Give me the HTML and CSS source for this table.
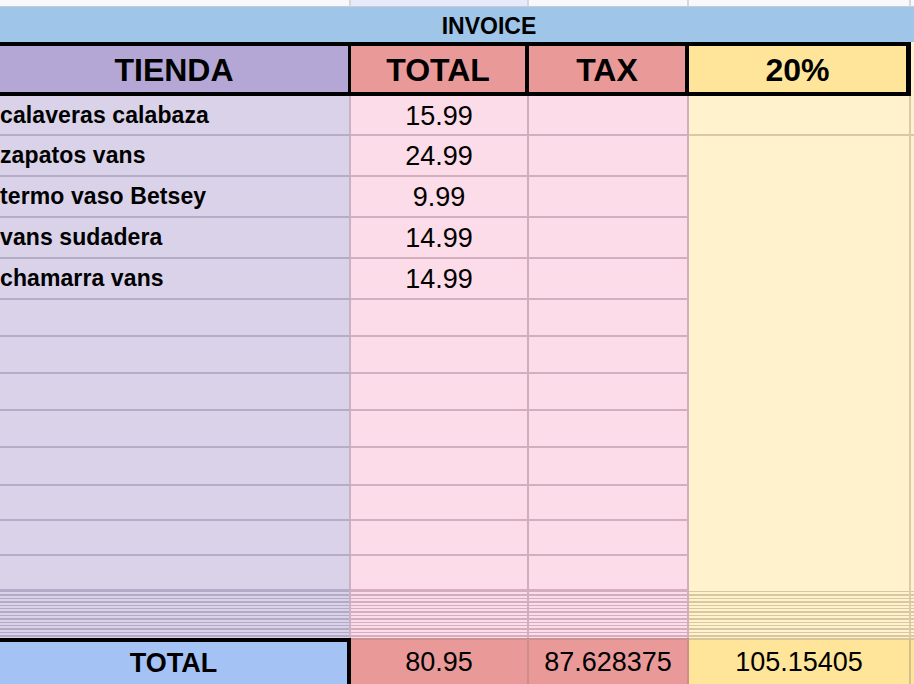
FILE: index.html
```html
<!DOCTYPE html>
<html lang="es">
<head>
<meta charset="utf-8">
<title>Invoice</title>
<link rel="stylesheet" href="styles.css">
</head>
<body>
<div class="sheet">
  <div class="cell top"></div>
  <div class="cell top top-alt"></div>
  <div class="cell top"></div>
  <div class="cell top"></div>
  <div class="cell top top-end"></div>

  <div class="invoice"><span>INVOICE</span></div>

  <div class="cell head head-tienda">TIENDA</div>
  <div class="cell head head-red">TOTAL</div>
  <div class="cell head head-red">TAX</div>
  <div class="cell head head-yellow">20%</div>
  <div class="cell head-end"></div>

  <div class="cell name">calaveras calabaza</div>
  <div class="cell pink num">15.99</div>
  <div class="cell pink"></div>
  <div class="cell yellow first"></div>
  <div class="cell yellow-end first"></div>

  <div class="cell name">zapatos vans</div>
  <div class="cell pink num">24.99</div>
  <div class="cell pink"></div>
  <div class="cell yellow merged"></div>
  <div class="cell yellow-end merged"></div>

  <div class="cell name">termo vaso Betsey</div>
  <div class="cell pink num">9.99</div>
  <div class="cell pink"></div>

  <div class="cell name">vans sudadera</div>
  <div class="cell pink num">14.99</div>
  <div class="cell pink"></div>

  <div class="cell name">chamarra vans</div>
  <div class="cell pink num">14.99</div>
  <div class="cell pink"></div>

  <div class="cell name"></div><div class="cell pink"></div><div class="cell pink"></div>
  <div class="cell name"></div><div class="cell pink"></div><div class="cell pink"></div>
  <div class="cell name"></div><div class="cell pink"></div><div class="cell pink"></div>
  <div class="cell name"></div><div class="cell pink"></div><div class="cell pink"></div>
  <div class="cell name"></div><div class="cell pink"></div><div class="cell pink"></div>
  <div class="cell name"></div><div class="cell pink"></div><div class="cell pink"></div>
  <div class="cell name"></div><div class="cell pink"></div><div class="cell pink"></div>
  <div class="cell name"></div><div class="cell pink"></div><div class="cell pink"></div>

  <div class="cell squeeze sq-lav"></div>
  <div class="cell squeeze sq-pink"></div>
  <div class="cell squeeze sq-pink"></div>
  <div class="cell squeeze sq-yellow"></div>
  <div class="cell squeeze sq-yellow sq-end"></div>

  <div class="cell total-label">TOTAL</div>
  <div class="cell total-red">80.95</div>
  <div class="cell total-red">87.628375</div>
  <div class="cell total-yellow">105.15405</div>
  <div class="cell total-end"></div>
</div>
</body>
</html>
```

FILE: styles.css
```css
html, body {
  margin: 0;
  padding: 0;
  background: #ffffff;
}

body {
  font-family: "Liberation Sans", Arial, Helvetica, sans-serif;
  color: #000;
  overflow: hidden;
}

.sheet {
  display: grid;
  width: 914px;
  grid-template-columns: 351px 178px 160px 222px 1fr;
  grid-template-rows:
    7px 35px 54px
    40px 41px 41px 41px 41px
    37px 37px 37px 37px 38px
    35px 35px 35px
    47px 46px;
}

.cell {
  box-sizing: border-box;
  display: flex;
  align-items: center;
  min-width: 0;
  overflow: hidden;
  white-space: nowrap;
}

/* top strip (row above invoice) */
.top {
  background: #f8f8fc;
  border-right: 2px solid #d6d6de;
  border-bottom: 1px solid #c9c9d2;
}
.top-alt { background: #e7eafa; }
.top-end { border-right: 0; }

/* invoice banner */
.invoice {
  grid-column: 1 / -1;
  background: #9fc5e8;
  display: flex;
  justify-content: center;
  align-items: center;
  padding: 4px 0 0 64px;
  font-size: 23px;
  font-weight: 700;
}

/* header row */
.head {
  justify-content: center;
  font-size: 32px;
  font-weight: 700;
  border-top: 4px solid #000;
  border-bottom: 4px solid #000;
  border-right: 4px solid #000;
  padding-top: 2px;
}
.head-tienda { background: #b4a7d6; margin-right: -1px; }
.head-red { background: #ea9999; }
.head-yellow { background: #ffe599; border-right-width: 5px; }
.head-end { background: #fff2cc; }

/* data rows */
.name {
  background: #d9d2e9;
  border-right: 2px solid #c7b2c6;
  border-bottom: 2px solid #b5adc7;
  padding-left: 0;
  font-size: 23px;
  font-weight: 700;
  letter-spacing: 0.1px;
}

.pink {
  background: #fcdce8;
  border-right: 2px solid #d2adbc;
  border-bottom: 2px solid #d3aebe;
}

.num {
  justify-content: center;
  font-size: 27px;
  padding-top: 2px;
}

.yellow {
  background: #fff2cc;
  border-right: 2px solid #dccba6;
}
.yellow-end { background: #fff2cc; }
.first { border-bottom: 2px solid #d9c9a6; }
.merged { grid-row: span 12; }

/* compressed (hidden) rows */
.squeeze {
  border-right: 2px solid var(--vline);
  background: repeating-linear-gradient(
    to bottom,
    var(--line) 0 1.3px,
    var(--bg) 1.3px 3.4px
  );
}
.sq-lav { --line: #b3abc5; --bg: #d9d2e9; --vline: #c7b2c6; }
.sq-pink { --line: #d3aebe; --bg: #fcdce8; --vline: #d2adbc; }
.sq-yellow { --line: #d8c8a2; --bg: #fff2cc; --vline: #dccba6; }
.sq-end { border-right: 0; }

/* total row */
.total-label {
  justify-content: center;
  background: #a4c2f4;
  border-top: 4px solid #000;
  border-right: 4px solid #000;
  font-size: 27px;
  font-weight: 700;
  padding-top: 1px;
}

.total-red,
.total-yellow {
  justify-content: center;
  font-size: 27px;
  padding-top: 1px;
}
.total-red {
  background: #ea9999;
  border-top: 2px solid #cf8f93;
  border-right: 2px solid #cf8e8e;
}
.total-yellow {
  background: #ffe599;
  border-top: 2px solid #d8c69a;
  border-right: 2px solid #d4c08c;
}
.total-end {
  background: #ffe599;
  border-top: 2px solid #d8c69a;
}
```
